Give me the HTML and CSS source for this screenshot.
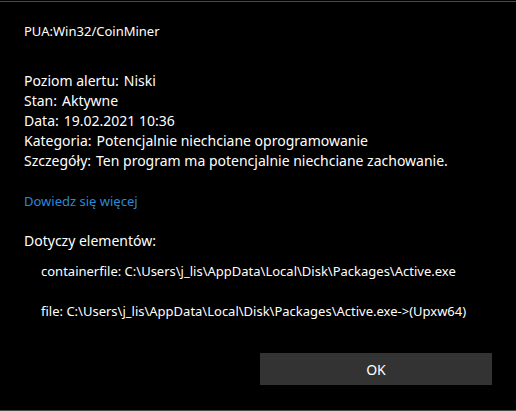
FILE: index.html
```html
<!DOCTYPE html>
<html lang="pl">
<head>
<meta charset="utf-8">
<link rel="stylesheet" href="styles.css">
</head>
<body>
<div class="window">
  <div class="title">PUA:Win32/CoinMiner</div>
  <div class="details">
    <div class="row"><span>Poziom alertu:</span><span>Niski</span></div>
    <div class="row"><span>Stan:</span><span>Aktywne</span></div>
    <div class="row"><span>Data:</span><span>19.02.2021 10:36</span></div>
    <div class="row"><span>Kategoria:</span><span>Potencjalnie niechciane oprogramowanie</span></div>
    <div class="row"><span>Szczegóły:</span><span>Ten program ma potencjalnie niechciane zachowanie.</span></div>
  </div>
  <a class="link" href="#">Dowiedz się więcej</a>
  <div class="affects">Dotyczy elementów:</div>
  <ul class="items">
    <li>containerfile: C:\Users\j_lis\AppData\Local\Disk\Packages\Active.exe</li>
    <li>file: C:\Users\j_lis\AppData\Local\Disk\Packages\Active.exe-&gt;(Upxw64)</li>
  </ul>
  <div class="actions"><button class="ok">OK</button></div>
</div>
</body>
</html>
```
FILE: styles.css
```css
html, body {
  margin: 0;
  padding: 0;
  background: #000;
}
body {
  width: 516px;
  height: 411px;
  overflow: hidden;
  font-family: "Noto Sans", "Open Sans", sans-serif;
  color: #fff;
}
.window {
  box-sizing: border-box;
  height: 410px;
  margin-top: 1px;
  border-top: 1px solid #4a4a4a;
  border-bottom: 1px solid #4a4a4a;
  padding: 0 24px;
  display: flex;
  flex-direction: column;
}
.title {
  font-size: 13px;
  line-height: 20px;
  margin-top: 19px;
}
.details {
  margin-top: 30px;
  font-size: 14px;
  line-height: 20px;
}
.row span + span { margin-left: 5px; }
.link {
  align-self: flex-start;
  margin-top: 20px;
  font-size: 13px;
  line-height: 20px;
  color: #2a8ad9;
  text-decoration: none;
}
.affects {
  margin-top: 20px;
  font-size: 14px;
  line-height: 20px;
}
.items {
  list-style: none;
  margin: 10px 0 0;
  padding: 0 0 0 17px;
  font-size: 13px;
  line-height: 20px;
  display: flex;
  flex-direction: column;
  gap: 20px;
}
.actions {
  margin-top: 32px;
  display: flex;
  justify-content: flex-end;
}
.ok {
  width: 232px;
  height: 32px;
  background: #333;
  border: none;
  color: #fff;
  font-family: inherit;
  font-size: 14px;
  padding: 0;
}
```
